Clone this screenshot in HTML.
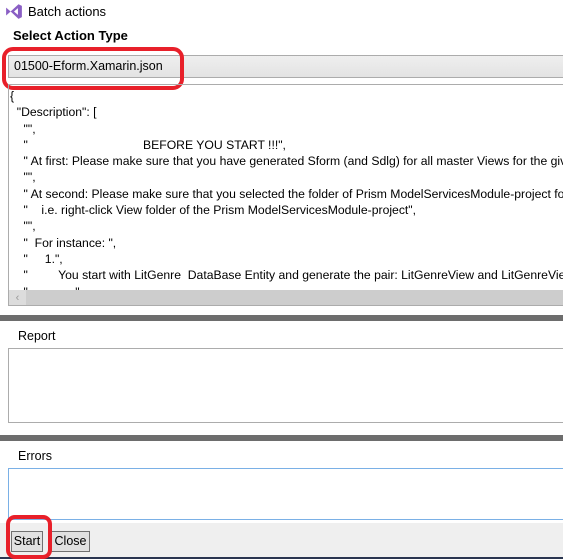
<!DOCTYPE html>
<html><head><meta charset="utf-8"><style>
*{margin:0;padding:0;box-sizing:border-box}
body{width:563px;height:559px;overflow:hidden;background:#fff;font-family:"Liberation Sans",sans-serif;font-size:12px;color:#000;position:relative}
.a{position:absolute}
.t{white-space:pre;font-size:12.2px;line-height:16.3px}
</style></head><body>
<svg class="a" style="left:5px;top:3px" width="18" height="17" viewBox="0 0 16 15"><path d="M1 4 L5 7.5 L1 11 Z M5 7.5 L12 1 L15 2.5 L15 12.5 L12 14 Z" fill="#8a5fc4"/><path d="M11.5 4.5 L8 7.5 L11.5 10.5 Z" fill="#fff"/></svg>
<div class="a" style="left:28px;top:4px;font-size:13px">Batch actions</div>
<div class="a" style="left:13px;top:28px;font-size:13px;font-weight:bold">Select Action Type</div>
<div class="a" style="left:8px;top:55px;width:555px;height:23px;background:linear-gradient(#efefef,#e3e3e3);border:1px solid #acacac;border-right:none"></div>
<div class="a" style="left:14px;top:59px;font-size:12.5px">01500-Eform.Xamarin.json</div>
<div class="a" style="left:2px;top:47px;width:182px;height:43px;border:4px solid #e8202a;border-radius:11px"></div>
<div class="a" style="left:8px;top:84px;width:555px;height:222px;border:1px solid #acacac;border-right:none;overflow:hidden">
<div class="t a" style="left:1px;top:3px">{
  "Description": [
    "",
    "                                  BEFORE YOU START !!!",
    " At first: Please make sure that you have generated Sform (and Sdlg) for all master Views for the given
    "",
    " At second: Please make sure that you selected the folder of Prism ModelServicesModule-project for t
    "    i.e. right-click View folder of the Prism ModelServicesModule-project",
    "",
    "  For instance: ",
    "     1.",
    "         You start with LitGenre  DataBase Entity and generate the pair: LitGenreView and LitGenreViewPa
    "           ...",</div>
<div class="a" style="left:0;top:205px;width:555px;height:17px;background:#cdcdcd"></div>
<div class="a" style="left:0;top:205px;width:17px;height:16px;background:#dcdcdc;color:#999;font-size:11px;text-align:center;line-height:16px">&lsaquo;</div>
</div>
<div class="a" style="left:0;top:315px;width:563px;height:6px;background:#6d6d6d"></div>
<div class="a" style="left:18px;top:329px;font-size:12.5px">Report</div>
<div class="a" style="left:8px;top:348px;width:555px;height:75px;border:1px solid #acacac;border-right:none"></div>
<div class="a" style="left:0;top:435px;width:563px;height:6px;background:#6d6d6d"></div>
<div class="a" style="left:18px;top:449px;font-size:12.5px">Errors</div>
<div class="a" style="left:8px;top:468px;width:555px;height:52px;border:1px solid #7ab0e6;border-right:none"></div>
<div class="a" style="left:0;top:523px;width:563px;height:35px;background:#efefef"></div>
<div class="a" style="left:0;top:557px;width:563px;height:2px;background:#2a3550"></div>
<div class="a" style="left:11px;top:531px;width:32px;height:21px;background:#e1e1e1;border:1px solid #707070;font-size:12.5px;line-height:19px;text-align:center">Start</div>
<div class="a" style="left:51px;top:531px;width:39px;height:21px;background:#e1e1e1;border:1px solid #707070;font-size:12.5px;line-height:19px;text-align:center">Close</div>
<div class="a" style="left:6px;top:515px;width:46px;height:44px;border:4px solid #e8202a;border-radius:9px"></div>
</body></html>
